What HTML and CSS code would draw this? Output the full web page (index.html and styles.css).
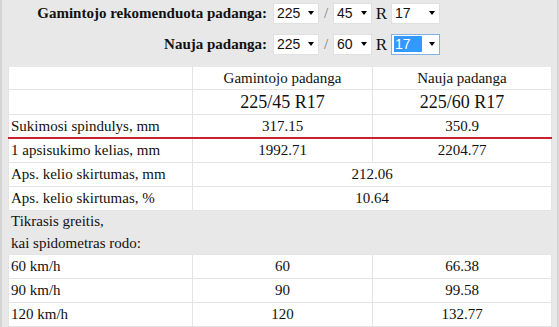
FILE: index.html
```html
<!DOCTYPE html>
<html lang="lt">
<head>
  <meta charset="UTF-8">
  <title>Padangų skaičiuoklė</title>
  <link rel="stylesheet" href="styles.css">
</head>
<body>

<div class="page">
  <form class="sizes">
    <label class="sizes-label">Gamintojo rekomenduota padanga:</label>
    <div class="sizes-pick">
      <span class="pick pick-w"><span class="pick-val">225</span></span>
      <span class="sep">/</span>
      <span class="pick pick-h"><span class="pick-val">45</span></span>
      <span class="rim">R</span>
      <span class="pick pick-r"><span class="pick-val">17</span></span>
    </div>

    <label class="sizes-label">Nauja padanga:</label>
    <div class="sizes-pick">
      <span class="pick pick-w"><span class="pick-val">225</span></span>
      <span class="sep">/</span>
      <span class="pick pick-h"><span class="pick-val">60</span></span>
      <span class="rim">R</span>
      <span class="pick pick-r focused"><span class="pick-val">17</span></span>
    </div>
  </form>

  <table class="compare">
    <colgroup>
      <col class="c-name">
      <col class="c-old">
      <col class="c-new">
    </colgroup>
    <tr class="head">
      <td></td>
      <td>Gamintojo padanga</td>
      <td>Nauja padanga</td>
    </tr>
    <tr class="size">
      <td></td>
      <td>225/45 R17</td>
      <td>225/60 R17</td>
    </tr>
    <tr class="radius">
      <td>Sukimosi spindulys, mm</td>
      <td>317.15</td>
      <td>350.9</td>
    </tr>
    <tr>
      <td>1 apsisukimo kelias, mm</td>
      <td>1992.71</td>
      <td>2204.77</td>
    </tr>
    <tr>
      <td>Aps. kelio skirtumas, mm</td>
      <td colspan="2">212.06</td>
    </tr>
    <tr>
      <td>Aps. kelio skirtumas, %</td>
      <td colspan="2">10.64</td>
    </tr>
    <tr class="group">
      <td>Tikrasis greitis,<br>kai spidometras rodo:</td>
      <td></td>
      <td></td>
    </tr>
    <tr>
      <td>60 km/h</td>
      <td>60</td>
      <td>66.38</td>
    </tr>
    <tr>
      <td>90 km/h</td>
      <td>90</td>
      <td>99.58</td>
    </tr>
    <tr>
      <td>120 km/h</td>
      <td>120</td>
      <td>132.77</td>
    </tr>
  </table>
</div>

</body>
</html>
```

FILE: styles.css
```css
html, body {
  margin: 0;
  background-color: #e8e8e8;
  color: #111;
  font-family: "Liberation Serif", "Times New Roman", serif;
}
.page {
  min-height: 100vh;
  box-sizing: border-box;
  border-left: 2px solid #d4d4d4;
  border-right: 2px solid #d4d4d4;
  padding: 3px 5px 0 6px;
  overflow: hidden;
}

/* size pickers */
.sizes {
  display: grid;
  grid-template-columns: 259px auto;
  column-gap: 6px;
  row-gap: 10px;
  align-items: center;
  margin-bottom: 12px;
}
.sizes-label {
  text-align: right;
  font-weight: bold;
  font-size: 15px;
}
.sizes-pick {
  display: flex;
  align-items: center;
  height: 21px;
}
.pick {
  position: relative;
  box-sizing: border-box;
  height: 21px;
  background-color: #fff;
  border: 1px solid #e0e0e0;
  font-family: "Liberation Sans", Arial, sans-serif;
  font-size: 14px;
  line-height: 19px;
  padding-left: 3px;
}
.pick::after {
  content: "";
  position: absolute;
  right: 4px;
  top: 7px;
  border-top: 4px solid #000;
  border-left: 3.5px solid transparent;
  border-right: 3.5px solid transparent;
}
.pick-w { width: 46px; }
.pick-h { width: 39px; }
.pick-r { width: 49px; }
.pick-val {
  display: inline-block;
  line-height: 16px;
}
.pick.focused {
  border-color: #7fb2e6;
  padding-left: 2px;
}
.pick.focused .pick-val {
  background-color: #3399ff;
  color: #fff;
  width: 27px;
  padding-left: 1px;
}
.sep {
  color: #777;
  font-size: 15px;
  width: 14px;
  text-align: center;
}
.rim {
  font-size: 17px;
  width: 19px;
  text-align: center;
}

/* comparison table */
.compare {
  width: 100%;
  border-collapse: collapse;
  font-size: 15px;
}
.c-name { width: 184px; }
.c-old { width: 180px; }
.compare td {
  background-color: #fff;
  border: 1px solid #e4e4e4;
  border-top: 0;
  padding: 0 2px;
  line-height: 23px;
  text-align: center;
  white-space: nowrap;
}
.compare td:first-child {
  text-align: left;
}
.compare .head td {
  line-height: 22px;
}
.compare .size td {
  font-size: 18px;
  line-height: 24px;
}
.compare .radius td {
  line-height: 22px;
  border-bottom: 2px solid #cc1f2f;
}
.compare .group td {
  background-color: #e8e8e8;
  border-left-color: #e8e8e8;
  border-right-color: #e8e8e8;
  line-height: 21.5px;
}
```
